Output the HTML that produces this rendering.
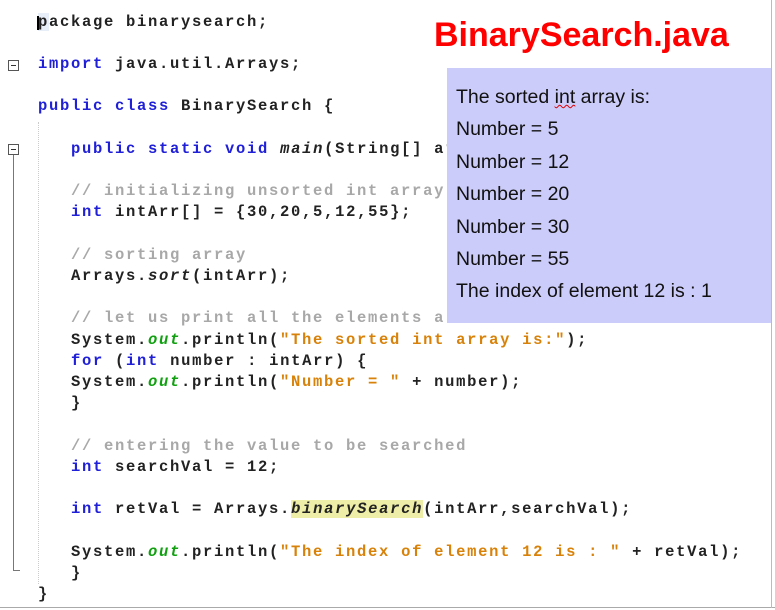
<!DOCTYPE html>
<html><head><meta charset="utf-8"><style>
html,body{margin:0;padding:0;background:#fff;}
body{width:775px;height:610px;position:relative;overflow:hidden;}
.code{position:absolute;left:38px;top:11.5px;font-family:"Liberation Mono",monospace;font-size:15.5px;font-weight:bold;letter-spacing:1.7px;line-height:21.2px;color:#222;white-space:pre;}
.k{color:#2020d8}.s{color:#d8820a}.c{color:#a8a8a8}.o{color:#10a010;font-style:italic}.i{font-style:italic}
.hl{background:#eeeea8}
.fold{position:absolute;width:9px;height:9px;border:1px solid #555;background:#fff;}
.fold:after{content:"";position:absolute;left:2px;top:4px;width:5px;height:1px;background:#333;}
.panel{position:absolute;left:447px;top:68px;width:324px;height:255px;background:#ccccfa;}
.ptxt{position:absolute;left:456px;top:81px;font-family:"Liberation Sans",sans-serif;font-size:19.5px;line-height:32.4px;color:#111;white-space:pre;}
.title{position:absolute;left:434px;top:16px;font-family:"Liberation Sans",sans-serif;font-weight:bold;font-size:34px;color:#f00;}
</style></head><body>
<div class="code"><span style="background:#e8eef8">p</span>ackage binarysearch;

<span class="k">import</span> java.util.Arrays;

<span class="k">public class</span> BinarySearch {

   <span class="k">public static void</span> <span class="i">main</span>(String[] args) {

   <span class="c">// initializing unsorted int array</span>
   <span class="k">int</span> intArr[] = {30,20,5,12,55};

   <span class="c">// sorting array</span>
   Arrays.<span class="i">sort</span>(intArr);

   <span class="c">// let us print all the elements a</span>
   System.<span class="o">out</span>.println(<span class="s">"The sorted int array is:"</span>);
   <span class="k">for</span> (<span class="k">int</span> number : intArr) {
   System.<span class="o">out</span>.println(<span class="s">"Number = "</span> + number);
   }

   <span class="c">// entering the value to be searched</span>
   <span class="k">int</span> searchVal = 12;

   <span class="k">int</span> retVal = Arrays.<span class="i hl">binarySearch</span>(intArr,searchVal);

   System.<span class="o">out</span>.println(<span class="s">"The index of element 12 is : "</span> + retVal);
   }
}</div>
<div style="position:absolute;left:37px;top:16px;width:2px;height:14px;background:#000"></div>
<div class="fold" style="left:8px;top:60px"></div>
<div class="fold" style="left:8px;top:144px"></div>
<div style="position:absolute;left:13px;top:155px;width:1px;height:415px;background:#777"></div>
<div style="position:absolute;left:13px;top:570px;width:7px;height:1px;background:#777"></div>
<div style="position:absolute;left:38px;top:122px;width:0;height:462px;border-left:1px dotted #ccc"></div>
<div style="position:absolute;left:0;top:607px;width:775px;height:1px;background:#aaa"></div>
<div style="position:absolute;left:771px;top:0;width:1px;height:608px;background:#bbb"></div>
<div class="title">BinarySearch.java</div>
<div class="panel"></div>
<div class="ptxt">The sorted <span style="text-decoration:underline wavy #d00;text-decoration-thickness:1px">int</span> array is:
Number = 5
Number = 12
Number = 20
Number = 30
Number = 55
The index of element 12 is : 1</div>
</body></html>
